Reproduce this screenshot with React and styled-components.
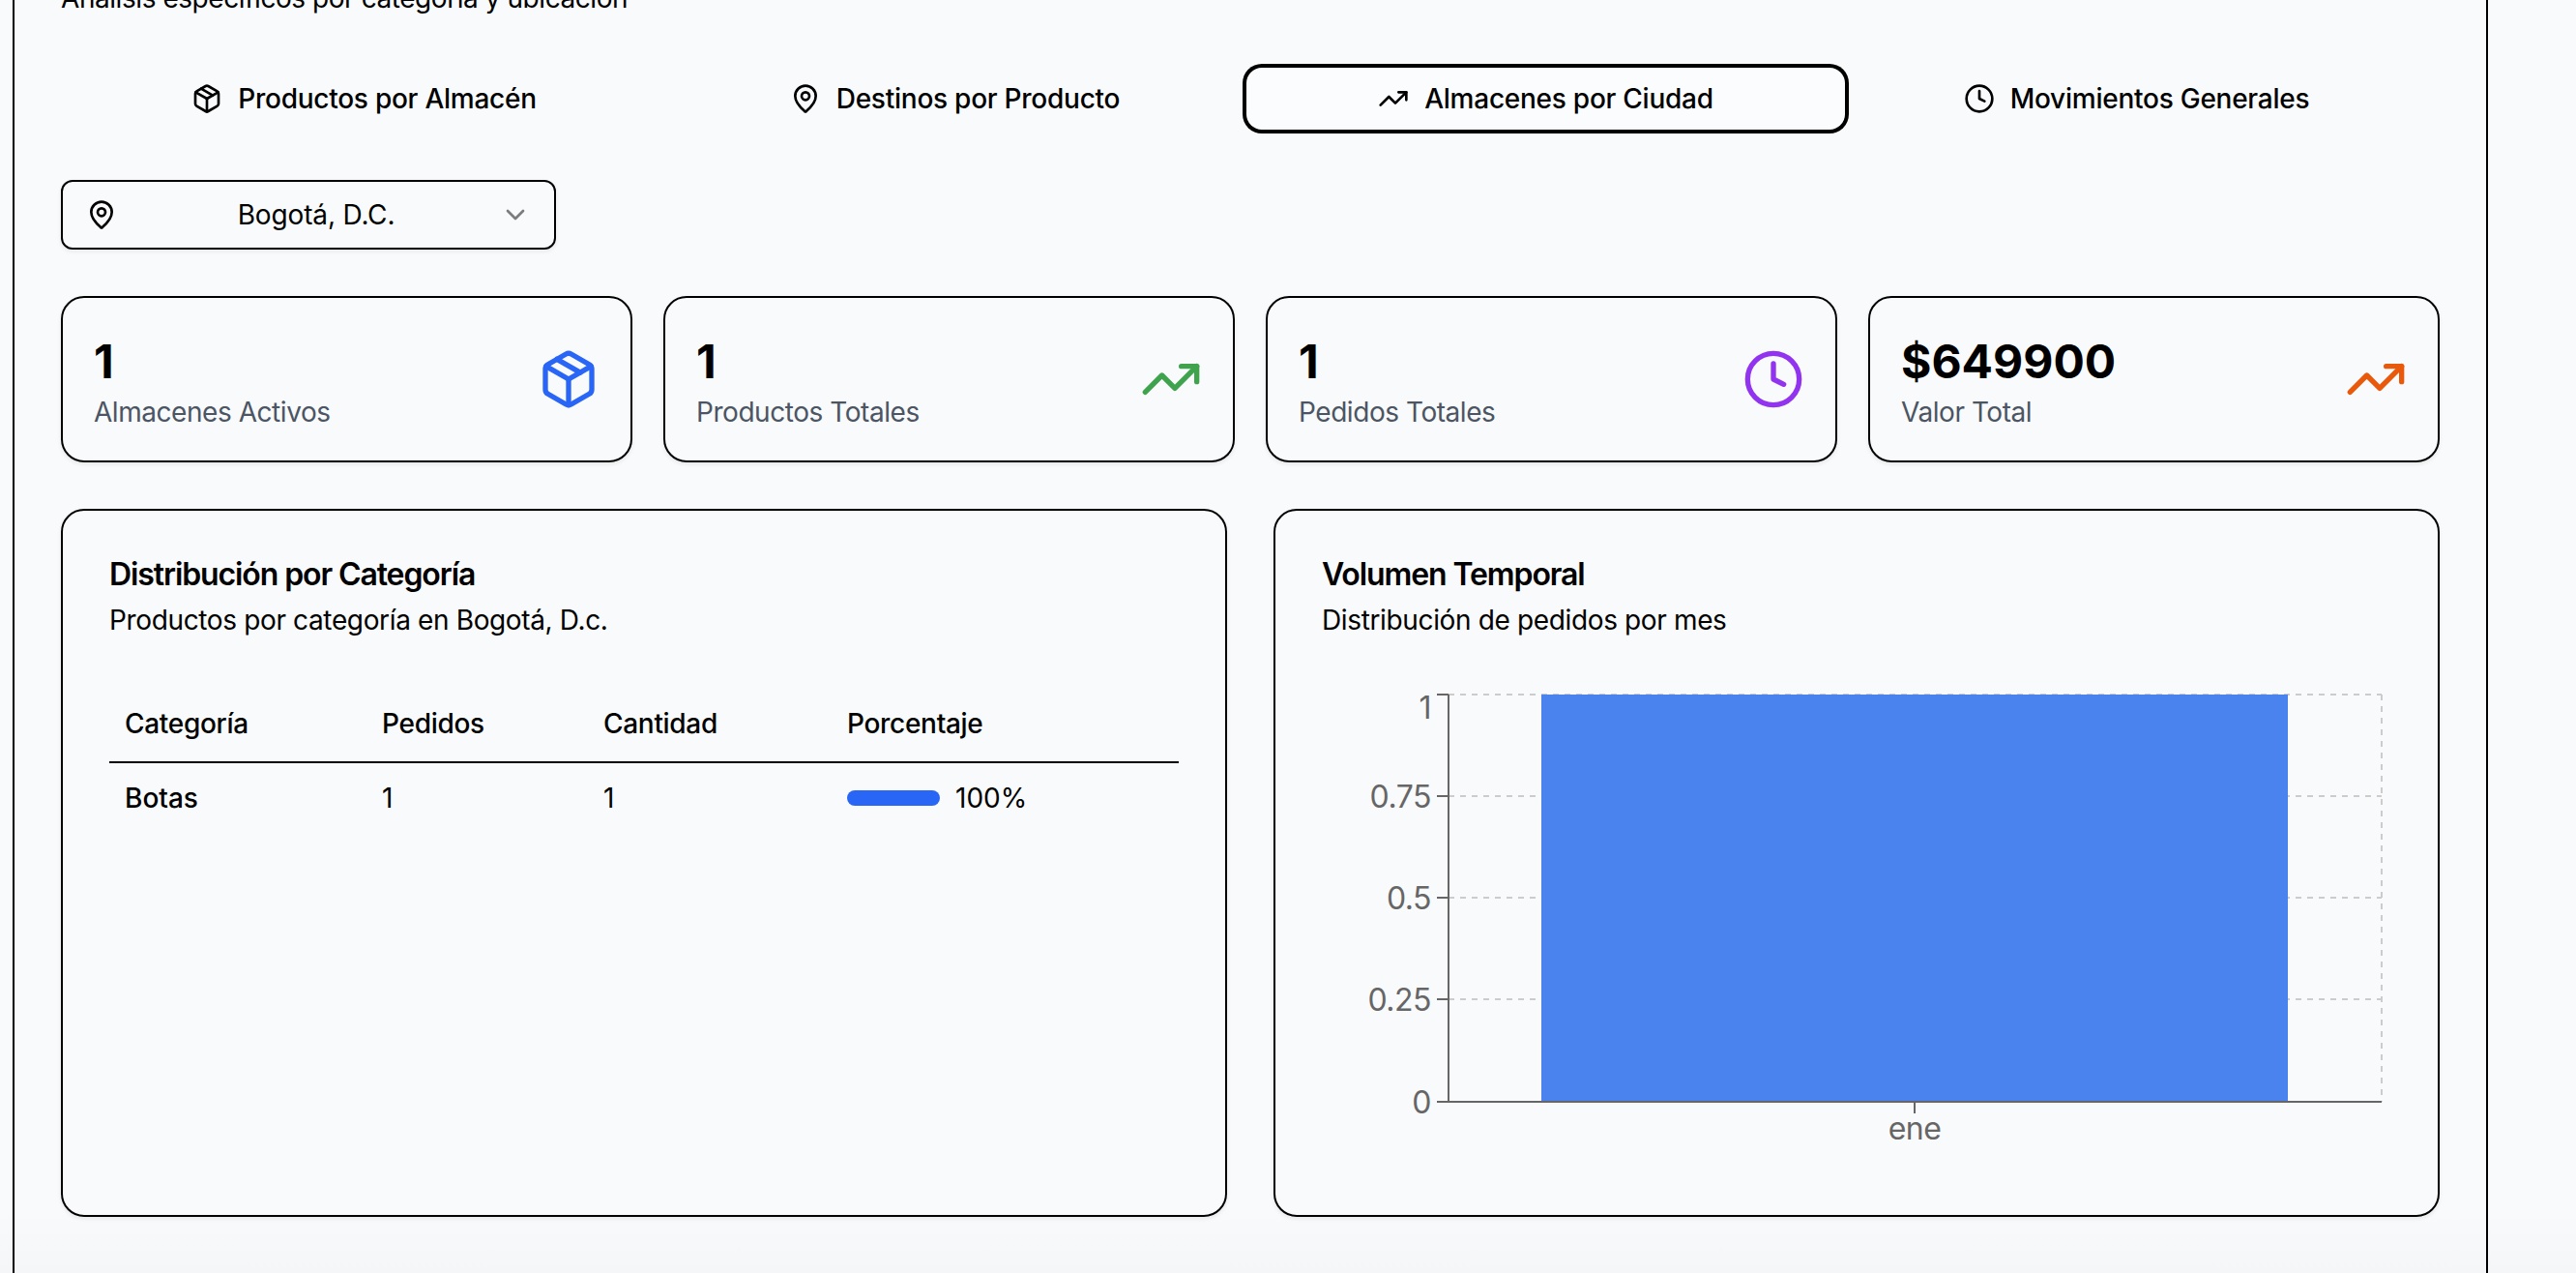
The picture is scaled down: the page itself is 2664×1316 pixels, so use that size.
import React from "react";
import styled, { createGlobalStyle } from "styled-components";
import { Package, MapPin, TrendingUp, Clock, ChevronDown } from "lucide-react";

const GlobalStyle = createGlobalStyle`
  html, body {
    margin: 0;
    height: 1316px;
    overflow: hidden;
    background: linear-gradient(180deg, #f9fafc 0%, #f9fafc 95%, #f5f6f8 100%);
    font-family: Inter, "Noto Sans", sans-serif;
    color: #000;
  }
  * { box-sizing: border-box; }
`;

const Shell = styled.div`
  padding: 0 91px 0 13px;
`;

const Frame = styled.main`
  margin-top: -72px;
  padding: 48px 48px 58px;
  border: 2px solid #000;
  border-bottom: 0;
  display: flex;
  flex-direction: column;
  gap: 48px;
`;

const Subtitle = styled.p`
  margin: 0;
  font-size: 28px;
  line-height: 40px;
  letter-spacing: -0.44px;
`;

const Tabs = styled.nav`
  display: grid;
  grid-template-columns: repeat(4, 1fr);
  height: 72px;
  padding: 8px;
`;

const Tab = styled.button`
  display: flex;
  align-items: center;
  justify-content: center;
  gap: 16px;
  font: 500 28px/40px Inter, sans-serif;
  letter-spacing: -0.25px;
  color: #000;
  border: 0;
  border-radius: 12px;
  padding: 0;
  background: ${(p) => (p.$active ? "#fbfcfe" : "transparent")};
  box-shadow: ${(p) => (p.$active ? "0 0 0 4px #fbfcfe, 0 0 0 8px #000" : "none")};
`;

const SelectBox = styled.div`
  width: 512px;
  height: 72px;
  padding: 0 24px;
  display: flex;
  align-items: center;
  font-size: 28px;
  letter-spacing: -0.14px;
  border: 2px solid #000;
  border-radius: 12px;
  box-shadow: 0 2px 4px rgba(0, 0, 0, 0.08);
`;

const SelectPin = styled(MapPin)`
  margin-right: 16px;
`;

const SelectValue = styled.span`
  flex: 1;
  text-align: center;
`;

const Chevron = styled(ChevronDown)`
  opacity: 0.5;
`;

const StatGrid = styled.section`
  display: grid;
  grid-template-columns: repeat(4, 1fr);
  gap: 32px;
`;

const StatCard = styled.article`
  padding: 32px;
  display: flex;
  align-items: center;
  justify-content: space-between;
  border: 2px solid #000;
  border-radius: 24px;
  box-shadow: 0 2px 4px rgba(0, 0, 0, 0.08);
`;

const StatText = styled.div`
  margin: 2px 0 -2px;
`;

const StatValue = styled.div`
  font-size: 48px;
  line-height: 64px;
  font-weight: 700;
`;

const StatLabel = styled.div`
  font-size: 28px;
  line-height: 40px;
  letter-spacing: -0.45px;
  color: #4b5563;
`;

const PanelGrid = styled.section`
  display: grid;
  grid-template-columns: 1fr 1fr;
  gap: 48px;
`;

const Panel = styled.article`
  height: 732px;
  padding: 48px;
  border: 2px solid #000;
  border-radius: 24px;
  box-shadow: 0 2px 4px rgba(0, 0, 0, 0.08);
`;

const PanelTitle = styled.h3`
  margin: 0 0 9px;
  font-size: 32px;
  line-height: 36px;
  font-weight: 600;
  letter-spacing: -1.1px;
`;

const PanelDesc = styled.p`
  margin: 0 0 47px;
  font-size: 28px;
  line-height: 40px;
  letter-spacing: -0.36px;
`;

const Table = styled.table`
  width: 100%;
  margin-top: 1px;
  table-layout: fixed;
  border-collapse: collapse;
  font-size: 28px;
  line-height: 40px;
`;

const Th = styled.th`
  width: ${(p) => p.$w || "auto"};
  height: 80px;
  padding: 0 16px;
  text-align: left;
  font-weight: 500;
  letter-spacing: -0.3px;
  border-bottom: 2px solid #000;
`;

const Td = styled.td`
  height: 72px;
  padding: 16px;
  font-weight: ${(p) => (p.$strong ? 500 : 400)};
`;

const PercentCell = styled.div`
  display: flex;
  align-items: center;
  gap: 16px;
`;

const Bar = styled.div`
  width: 96px;
  height: 16px;
  border-radius: 8px;
  background: #2a66f5;
`;

const ChartSvg = styled.svg`
  display: block;
  margin: 0 0 0 -8px;
  overflow: visible;
  font-family: Inter, sans-serif;
  letter-spacing: -0.5px;
`;

const stats = [
  { value: "1", label: "Almacenes Activos", Icon: Package, color: "#2a66f5" },
  { value: "1", label: "Productos Totales", Icon: TrendingUp, color: "#3fa34d" },
  { value: "1", label: "Pedidos Totales", Icon: Clock, color: "#9233f0" },
  { value: "$649900", label: "Valor Total", Icon: TrendingUp, color: "#e8590c" },
];

const tabs = [
  { label: "Productos por Almacén", Icon: Package },
  { label: "Destinos por Producto", Icon: MapPin },
  { label: "Almacenes por Ciudad", Icon: TrendingUp, active: true },
  { label: "Movimientos Generales", Icon: Clock },
];

const ticks = [
  { y: 10, label: "1", dy: 25 },
  { y: 115, label: "0.75", dy: 12 },
  { y: 220, label: "0.5", dy: 12 },
  { y: 325, label: "0.25", dy: 12 },
  { y: 431, label: "0", dy: 12 },
];

const Chart = () => (
  <ChartSvg width="1100" height="490" viewBox="0 0 1100 490">
    {ticks.slice(0, 4).map((t) => (
      <line key={t.y} x1="139" x2="1104" y1={t.y} y2={t.y} stroke="#ccc" strokeWidth="2" strokeDasharray="6 6" />
    ))}
    <line x1="1104" x2="1104" y1="10" y2="431" stroke="#ccc" strokeWidth="2" strokeDasharray="6 6" />
    <rect x="235" y="10" width="772" height="421" fill="#4a83ee" />
    <line x1="139" x2="139" y1="10" y2="431" stroke="#666" strokeWidth="2" />
    <line x1="139" x2="1104" y1="431" y2="431" stroke="#666" strokeWidth="2" />
    {ticks.map((t) => (
      <g key={t.label}>
        <line x1="127" x2="139" y1={t.y} y2={t.y} stroke="#666" strokeWidth="2" />
        <text x="121" y={t.y + t.dy} textAnchor="end" fontSize="32" fill="#666">
          {t.label}
        </text>
      </g>
    ))}
    <line x1="621" x2="621" y1="431" y2="443" stroke="#666" strokeWidth="2" />
    <text x="621" y="470" textAnchor="middle" fontSize="32" fill="#666">ene</text>
  </ChartSvg>
);

export default function App() {
  return (
    <>
      <GlobalStyle />
      <Shell>
        <Frame>
          <Subtitle>Análisis específicos por categoría y ubicación</Subtitle>

          <Tabs>
            {tabs.map(({ label, Icon, active }) => (
              <Tab key={label} $active={active}>
                <Icon size={32} />
                {label}
              </Tab>
            ))}
          </Tabs>

          <SelectBox>
            <SelectPin size={32} />
            <SelectValue>Bogotá, D.C.</SelectValue>
            <Chevron size={32} />
          </SelectBox>

          <StatGrid>
            {stats.map(({ value, label, Icon, color }) => (
              <StatCard key={label}>
                <StatText>
                  <StatValue>{value}</StatValue>
                  <StatLabel>{label}</StatLabel>
                </StatText>
                <Icon size={64} color={color} />
              </StatCard>
            ))}
          </StatGrid>

          <PanelGrid>
            <Panel>
              <PanelTitle>Distribución por Categoría</PanelTitle>
              <PanelDesc>Productos por categoría en Bogotá, D.c.</PanelDesc>
              <Table>
                <thead>
                  <tr>
                    <Th $w="266px">Categoría</Th>
                    <Th $w="229px">Pedidos</Th>
                    <Th $w="252px">Cantidad</Th>
                    <Th>Porcentaje</Th>
                  </tr>
                </thead>
                <tbody>
                  <tr>
                    <Td $strong>Botas</Td>
                    <Td>1</Td>
                    <Td>1</Td>
                    <Td>
                      <PercentCell>
                        <Bar />
                        100%
                      </PercentCell>
                    </Td>
                  </tr>
                </tbody>
              </Table>
            </Panel>

            <Panel>
              <PanelTitle>Volumen Temporal</PanelTitle>
              <PanelDesc>Distribución de pedidos por mes</PanelDesc>
              <Chart />
            </Panel>
          </PanelGrid>
        </Frame>
      </Shell>
    </>
  );
}
